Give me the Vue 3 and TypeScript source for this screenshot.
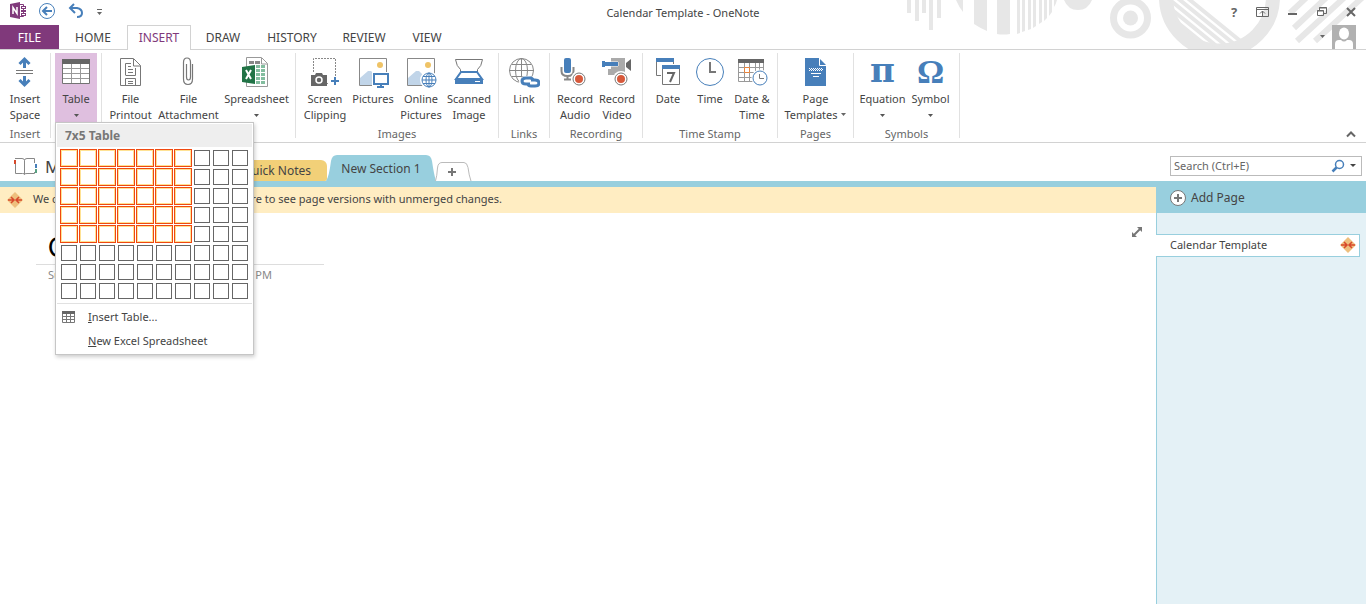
<script setup lang="ts">
import { ref } from 'vue'

interface Command {
  icon: string
  lines: string[]
  size: string
  drop?: 'below' | 'inline'
  active?: boolean
}
interface Group {
  name: string
  caption?: boolean
  size: string
  commands: Command[]
}

const tabs = [
  { name: 'FILE', kind: 'file' },
  { name: 'HOME', kind: 'home' },
  { name: 'INSERT', kind: 'insert' },
  { name: 'DRAW', kind: 'draw' },
  { name: 'HISTORY', kind: 'history' },
  { name: 'REVIEW', kind: 'review' },
  { name: 'VIEW', kind: 'view' },
]

const groups: Group[] = [
  { name: 'Insert', size: 'g50', commands: [{ icon: 'space', lines: ['Insert', 'Space'], size: 'w48' }] },
  { name: 'Tables', caption: false, size: 'g50', commands: [{ icon: 'table', lines: ['Table'], size: 'w42', drop: 'below', active: true }] },
  {
    name: 'Files',
    caption: false,
    size: 'g193',
    commands: [
      { icon: 'printout', lines: ['File', 'Printout'], size: 'w52' },
      { icon: 'attach', lines: ['File', 'Attachment'], size: 'w64' },
      { icon: 'sheet', lines: ['Spreadsheet'], size: 'w72', drop: 'below' },
    ],
  },
  {
    name: 'Images',
    size: 'g202',
    commands: [
      { icon: 'clip', lines: ['Screen', 'Clipping'], size: 'w48' },
      { icon: 'pictures', lines: ['Pictures'], size: 'w48' },
      { icon: 'online', lines: ['Online', 'Pictures'], size: 'w48' },
      { icon: 'scan', lines: ['Scanned', 'Image'], size: 'w48' },
    ],
  },
  { name: 'Links', size: 'g50', commands: [{ icon: 'link', lines: ['Link'], size: 'w42' }] },
  {
    name: 'Recording',
    size: 'g92',
    commands: [
      { icon: 'audio', lines: ['Record', 'Audio'], size: 'w42' },
      { icon: 'video', lines: ['Record', 'Video'], size: 'w42' },
    ],
  },
  {
    name: 'Time Stamp',
    size: 'g134',
    commands: [
      { icon: 'date', lines: ['Date'], size: 'w42' },
      { icon: 'time', lines: ['Time'], size: 'w42' },
      { icon: 'datetime', lines: ['Date &', 'Time'], size: 'w42' },
    ],
  },
  { name: 'Pages', size: 'g75', commands: [{ icon: 'template', lines: ['Page', 'Templates'], size: 'w72', drop: 'inline' }] },
  {
    name: 'Symbols',
    size: 'g105',
    commands: [
      { icon: 'pi', lines: ['Equation'], size: 'w48', drop: 'below' },
      { icon: 'omega', lines: ['Symbol'], size: 'w48', drop: 'below' },
    ],
  },
]

const columns = 10
const rows = 8
const picked = ref({ cols: 7, rows: 5 })
const cells = Array.from({ length: columns * rows }, (_, i) => ({ col: (i % columns) + 1, row: Math.floor(i / columns) + 1 }))
const isPicked = (c: { col: number; row: number }) => c.col <= picked.value.cols && c.row <= picked.value.rows
const query = ref('')
</script>

<template>
  <div class="window">
    <header class="top">
      <svg class="decor" width="470" height="49" viewBox="896 0 470 49" aria-hidden="true">
        <clipPath id="dial"><circle cx="1219.500" cy="-3" r="50" /></clipPath>
        <g fill="#e7e7e7">
          <path d="M907 0h4v13h-4zM915 0h4v21h-4zM922 0h4v13h-4zM929 0h4v30h-4zM937 0h4v18h-4z" />
          <path d="M956 0h7v12Q959 7 956 0zM974 0h13v31Q980 28 974 24zM997 0h13v34Q1003 35 997 34zM1017 0h3v33l-3 1zM1022 0h3v31l-3 1zM1028 0h3v29l-3 1zM1033 0h3v26l-3 2zM1039 0h3v22l-3 2zM1044 0h3v18l-3 3zM1049 0h3v12l-3 4zM1054 0h3q-1 4-3 7z" />
          <path d="M1064 0h28q-4 10-14 10t-14-10z" />
          <circle cx="1130.500" cy="18" r="7.500" />
        </g>
        <g fill="none" stroke="#e7e7e7">
          <circle cx="1130.500" cy="18" r="17" stroke-width="7" />
          <circle cx="1219.500" cy="-3" r="53.500" stroke-width="14" />
          <path clip-path="url(#dial)" d="M1185-4l64 52M1175-4l64 52M1165-4l64 52M1155-4l64 52M1145-4l64 52" stroke-width="4" />
          <path d="M1308-4l-18 17M1328-4l-34 32M1346-4l-49 45M1364-4l-49 45" stroke-width="6" />
        </g>
      </svg>
      <div class="titlebar">
        <div class="quick">
          <svg width="18" height="18" viewBox="0 0 18 18"><path d="M9.500 2.500h5v12h-5z" fill="#fff" stroke="#80397b" /><path d="M12 4h5v3h-5zM12 8h5v2h-5zM12 11h5v3h-5z" fill="#80397b" /><path d="M13 5h3v1h-3zM13 12h3v1h-3z" fill="#fff" /><path d="M1 2l10-2v17L1 15z" fill="#80397b" /><path d="M4 12V5.500l4 6V5" fill="none" stroke="#fff" stroke-width="1.500" /></svg>
          <button type="button" aria-label="Back"><svg width="18" height="18" viewBox="0 0 18 18" fill="none" stroke="#477fba"><circle cx="9" cy="9" r="7.500" /><path d="M14 9H5M9 5L5 9l4 4" stroke-width="2" /></svg></button>
          <button type="button" aria-label="Undo"><svg width="18" height="18" viewBox="0 0 18 18" fill="none" stroke="#477fba" stroke-width="2"><path d="M7 2L3 6l5 5M3 6h7q5 1 5 5t-5 4" /></svg></button>
          <button type="button" aria-label="Customize Quick Access Toolbar" class="more"><svg width="8" height="8" viewBox="0 0 8 8"><path d="M1 1h5v1H1zM1 4h5L3.500 7z" fill="#666" /></svg></button>
        </div>
        <h1>Calendar Template - OneNote</h1>
        <div class="controls">
          <button type="button" aria-label="Help" class="help">?</button>
          <button type="button" aria-label="Ribbon Display Options"><svg width="14" height="12" viewBox="0 0 14 12" fill="none" stroke="#666"><path d="M.5 1.500h12v9H.5zM1 3.500h11M6.500 10V5M4 7.500L6.500 5 9 7.500" /></svg></button>
          <button type="button" aria-label="Minimize"><svg width="12" height="12" viewBox="0 0 12 12"><path d="M1 7h9v2H1z" fill="#666" /></svg></button>
          <button type="button" aria-label="Restore"><svg width="12" height="12" viewBox="0 0 12 12" fill="none" stroke="#666"><path d="M3.500 4V1.500h7v6H8M3 2h8M1.500 4.500h6v5h-6zM1 5h7" /></svg></button>
          <button type="button" aria-label="Close"><svg width="12" height="12" viewBox="0 0 12 12"><path d="M2 2l8 8M10 2l-8 8" stroke="#666" stroke-width="2" /></svg></button>
        </div>
      </div>
      <div class="tabrow">
        <nav class="tabs">
          <button v-for="t in tabs" :key="t.name" type="button" :class="['tab', t.kind]">{{ t.name }}</button>
        </nav>
        <button type="button" class="account" aria-label="Account">
          <svg width="6" height="4" viewBox="0 0 6 4"><path d="M0 0h5L2.500 3z" fill="#666" /></svg>
          <svg width="24" height="24" viewBox="0 0 24 24"><path d="M0 0h24v24H0z" fill="#b1b1b1" /><ellipse cx="12" cy="8.500" rx="5" ry="6" fill="#fff" /><path d="M3 24v-5q0-4 4-4h2q3 3 6 0h2q4 0 4 4v5z" fill="#fff" /></svg>
        </button>
      </div>
    </header>

    <section class="ribbon" aria-label="Insert">
      <div v-for="g in groups" :key="g.name" :class="['group', g.size]" role="group" :aria-label="g.name">
        <div class="commands">
          <button v-for="c in g.commands" :key="c.icon" type="button" :class="['command', c.size, { active: c.active }]">
            <span class="glyph">
              <svg v-if="c.icon === 'space'" width="32" height="32" viewBox="0 0 32 32"><path d="M7 14.500h17M7 17.500h17" stroke="#777" /><path d="M15.500 12V3M10.500 8l5-5 5 5M15.500 20v9M10.500 24l5 5 5-5" fill="none" stroke="#477fba" stroke-width="3" /></svg>
              <svg v-else-if="c.icon === 'table'" width="32" height="32" viewBox="0 0 32 32"><path d="M2.500 3.500h27v24h-27z" fill="#fff" stroke="#737373" /><path d="M2 3h28v5H2z" fill="#666" /><path d="M3 12.500h26M3 17.500h26M3 22.500h26M11.500 8v19M20.500 8v19" stroke="#999" /></svg>
              <svg v-else-if="c.icon === 'printout'" width="32" height="32" viewBox="0 0 32 32" fill="none" stroke="#777"><path d="M5.500 2.500h13l7 7v20h-20zM18.500 3v7h7" fill="#fff" /><path d="M10.500 19V7.500h5.500M20.500 12v7.500h-10M13 10.500h3M13 13.500h5M13 16.500h5M10.500 29v-6.500h10V29M13 25.500h5M13 27.500h5" /></svg>
              <svg v-else-if="c.icon === 'attach'" width="32" height="32" viewBox="0 0 32 32" fill="none" stroke="#777"><path d="M13.500 8v13q0 3 2 3t2-3V6.500Q17.500 2 14 2t-3.500 4.500V23q0 5.500 4.500 5.500t4.500-5.500V8" stroke-width="1.200" /></svg>
              <svg v-else-if="c.icon === 'sheet'" width="32" height="32" viewBox="0 0 32 32"><path d="M5.500 1.500h15l6 6v23h-21zM20.500 2v6h6" fill="#fff" stroke="#999" /><path d="M8 5h5v3H8zM14 5h5v3h-5z" fill="#888" /><path d="M15 9h4v3h-4zM20 9h4v3h-4zM15 13h4v3h-4zM20 13h4v3h-4zM15 17h4v3h-4zM20 17h4v3h-4zM15 21h4v3h-4zM20 21h4v3h-4zM15 25h4v3h-4zM20 25h4v3h-4z" fill="#83bd9f" /><path d="M1 11l13-2v19L1 26z" fill="#217346" /><path d="M5 14l5 9M10 14l-5 9" stroke="#fff" stroke-width="2" /></svg>
              <svg v-else-if="c.icon === 'clip'" width="32" height="32" viewBox="0 0 32 32"><path d="M4.500 16V2.500h22V22M17 27.500h3" fill="none" stroke="#888" stroke-dasharray="2 1" /><path d="M2 19h4l1-2h6l1 2h4v11H2z" fill="#666" /><circle cx="10" cy="24" r="3" fill="#666" stroke="#fff" stroke-width="1.500" /><path d="M26 21v8M22 25h8" stroke="#477fba" stroke-width="2" /></svg>
              <svg v-else-if="c.icon === 'pictures' || c.icon === 'online'" width="32" height="32" viewBox="0 0 32 32"><path d="M2.500 2.500h27v27h-27z" fill="#fff" stroke="#888" /><path d="M3 29V22l8-7h3l9 9v5z" fill="#c1d5e9" /><circle cx="23" cy="9" r="3" fill="#efc366" /><template v-if="c.icon === 'pictures'"><path d="M15 16h17v16H15z" fill="#fff" /><path d="M17 18h14v10H17zM24 28v3M20 31h7" fill="#fff" stroke="#477fba" stroke-width="2" /></template><template v-else><circle cx="24" cy="24" r="9" fill="#fff" /><g fill="none" stroke="#477fba"><circle cx="24" cy="24" r="7" /><ellipse cx="24" cy="24" rx="3" ry="7" /><path d="M24 17v14M17 24h14M18 20.500h12M18 27.500h12" /></g></template></svg>
              <svg v-else-if="c.icon === 'scan'" width="32" height="32" viewBox="0 0 32 32"><path d="M2.500 3.500h27q-1 7-5 10v5h-17v-5q-4-3-5-10z" fill="#fff" stroke="#777" /><path d="M8 16h16l5 7H3z" fill="#fff" stroke="#477fba" stroke-width="2" /><path d="M2 23h28v5H2z" fill="#477fba" /><path d="M22 25.500h5" stroke="#fff" /></svg>
              <svg v-else-if="c.icon === 'link'" width="32" height="32" viewBox="0 0 32 32" fill="none"><g stroke="#888"><circle cx="13.500" cy="14.500" r="12" /><ellipse cx="13.500" cy="14.500" rx="6" ry="12" /><path d="M13.500 2v25M1 14.500h25M4 8.500h19M4 20.500h19" /></g><g stroke="#fff" stroke-width="6"><rect x="14" y="23" width="10" height="6" rx="3" /><rect x="21" y="24" width="9" height="6" rx="3" /></g><g stroke="#477fba" stroke-width="3"><path d="M22 28h-4q-4 0-4-3t4-3h4q3 0 3 3" /><path d="M23 24h4q4 0 4 3t-4 3h-4q-3 0-3-3" /></g></svg>
              <svg v-else-if="c.icon === 'audio'" width="32" height="32" viewBox="0 0 32 32"><rect x="5" y="2" width="7" height="15" rx="2" fill="#477fba" /><path d="M2.500 11v4q0 5 6 5t6-5v-4M8.500 20v4M5 23.500h7" fill="none" stroke="#888" stroke-width="2" /><circle cx="20" cy="23" r="8" fill="#fff" /><circle cx="20" cy="23" r="6" fill="#fff" stroke="#777" /><circle cx="20" cy="23" r="4" fill="#d7593b" /></svg>
              <svg v-else-if="c.icon === 'video'" width="32" height="32" viewBox="0 0 32 32"><path d="M10 2h14v17H7v-6h3z" fill="#aaa" /><path d="M25 7l5-4v12l-5-4z" fill="#666" /><path d="M1 5h3v1h13v4H4v1H1z" fill="#477fba" stroke="#fff" /><path d="M1 5h3v1h13v4H4v1H1z" fill="#477fba" /><circle cx="20" cy="23" r="8" fill="#fff" /><circle cx="20" cy="23" r="6" fill="#fff" stroke="#777" /><circle cx="20" cy="23" r="4" fill="#d7593b" /></svg>
              <svg v-else-if="c.icon === 'date'" width="32" height="32" viewBox="0 0 32 32"><path d="M4.500 2.500h17v17h-17z" fill="#fff" stroke="#777" /><path d="M4 2h18v4H4z" fill="#477fba" /><path d="M9 8h20v22H9z" fill="#fff" /><path d="M10.500 9.500h17v19h-17z" fill="#fff" stroke="#777" /><path d="M10 9h18v4H10z" fill="#477fba" /><path d="M15 17h7l-4 9" fill="none" stroke="#666" stroke-width="2" /></svg>
              <svg v-else-if="c.icon === 'time'" width="32" height="32" viewBox="0 0 32 32" fill="none"><circle cx="16" cy="16" r="13.500" stroke="#477fba" /><path d="M16 6v10h6" stroke="#777" stroke-width="2" /></svg>
              <svg v-else-if="c.icon === 'datetime'" width="32" height="32" viewBox="0 0 32 32" fill="none"><path d="M2.500 3.500h25v22h-25zM3 11.500h24M3 16.500h24M3 21.500h24M8.500 7v18M13.500 7v18M19.500 7v18M23.500 7v18" stroke="#999" /><path d="M2 3h26v4H2z" fill="#666" /><path d="M8.500 11.500h5v5h-5z" stroke="#e8833a" fill="#fff" /><circle cx="24" cy="22" r="8.500" fill="#fff" /><circle cx="24" cy="22" r="7" stroke="#477fba" /><path d="M23.500 18v4.500H28" stroke="#777" /></svg>
              <svg v-else-if="c.icon === 'template'" width="32" height="32" viewBox="0 0 32 32"><path d="M5 2h14l7 7v21H5z" fill="#477fba" /><path d="M19.500 2v7.500H26" fill="none" stroke="#fff" /><path d="M9 12.500h13M9 14.500h13" stroke="#fff" stroke-dasharray="1 1" /><path d="M10 13.500h13" stroke="#fff" stroke-dasharray="1 1" /><path d="M11 17.500h10M13 20.500h6" stroke="#fff" /></svg>
              <span v-else :class="['greek', c.icon]">{{ c.icon === 'pi' ? 'π' : 'Ω' }}</span>
            </span>
            <span v-for="(l, i) in c.lines" :key="l" class="line">{{ l }}<svg v-if="c.drop === 'inline' && i === 1" class="arrow" width="6" height="4" viewBox="0 0 6 4"><path d="M0 0h5L2.500 3z" fill="#666" /></svg></span>
            <span v-if="c.drop === 'below'" class="line caret"><svg width="5" height="3" viewBox="0 0 5 3"><path d="M0 0h5L2.500 3z" fill="#555" /></svg></span>
          </button>
        </div>
        <div v-if="g.caption !== false" class="caption">{{ g.name }}</div>

        <div v-if="g.name === 'Tables'" class="menu">
          <div class="menu-title">{{ picked.cols }}x{{ picked.rows }} Table</div>
          <div class="picker">
            <button v-for="c in cells" :key="c.row * 100 + c.col" type="button" :class="['cell', { picked: isPicked(c) }]" :aria-label="`${c.col} by ${c.row} table`" @mouseenter="picked = { cols: c.col, rows: c.row }"></button>
          </div>
          <button type="button" class="item">
            <svg width="13" height="12" viewBox="0 0 13 12"><path d="M.5.5h12v11H.5zM1 5.500h11M1 8.500h11M4.500 3v8M8.500 3v8" fill="none" stroke="#777" /><path d="M0 0h13v3H0z" fill="#666" /></svg>
            <span><u>I</u>nsert Table...</span>
          </button>
          <button type="button" class="item">
            <span class="blank"></span>
            <span><u>N</u>ew Excel Spreadsheet</span>
          </button>
        </div>
      </div>
      <button type="button" class="collapse" aria-label="Collapse the Ribbon"><svg width="10" height="7" viewBox="0 0 10 7"><path d="M1 5.500l4-4 4 4" fill="none" stroke="#666" stroke-width="2" /></svg></button>
    </section>

    <div class="bookbar">
      <button type="button" class="notebook">
        <svg width="24" height="20" viewBox="0 0 24 20" fill="none"><path d="M2 1.500h7q2.500 0 2.500 2v14q0-1-2-1H2.500V7M11.500 3.500q0-2 2.500-2h7.500V6M21.500 15v1.500H14q-2.500 0-2.500 1" stroke="#888" /><path d="M1 3h2v4H1z" fill="#d7492b" /><path d="M22 7h2v4h-2z" fill="#477fba" /><path d="M22 12h2v4h-2z" fill="#58a182" /></svg>
        <span>My Notebook</span>
      </button>
      <div class="sections">
        <button type="button" class="section notes">Quick Notes</button>
        <button type="button" class="section current">
          <svg width="110" height="26" viewBox="0 0 110 26" aria-hidden="true"><path d="M0 26Q3 22 5 6 6 0 11 0h89q5 0 6 6 2 14 4 20z" fill="#98cfde" /></svg>
          <span>New Section 1</span>
        </button>
        <button type="button" class="section add" aria-label="Create a New Section"><svg width="37" height="19" viewBox="0 0 37 19"><path d="M.5 19Q2 14 2.500 6 3 .5 7 .5h22q3 0 4 5 1 8 3 13.500" fill="#fff" stroke="#bbb" /><path d="M17 6v8M13 10h8" stroke="#777" stroke-width="2" /></svg></button>
      </div>
      <form class="search" role="search" @submit.prevent>
        <input v-model="query" type="text" aria-label="Search" placeholder="Search (Ctrl+E)" />
        <button type="submit" aria-label="Search"><svg width="14" height="14" viewBox="0 0 14 14" fill="none" stroke="#477fba"><circle cx="8.500" cy="5.500" r="4" stroke-width="1.500" /><path d="M5.500 8.500l-4 4" stroke-width="2.500" /></svg></button>
        <button type="button" aria-label="Search scope"><svg width="6" height="4" viewBox="0 0 6 4"><path d="M0 0h6L3 3z" fill="#444" /></svg></button>
      </form>
    </div>

    <div class="body">
      <main class="page">
        <button type="button" class="notice">
          <svg width="16" height="16" viewBox="0 0 16 16"><path d="M8 0l8 8-8 8-8-8z" fill="#eebf7d" /><path d="M1 8h5M4 5l3 3-3 3M15 8h-5M12 5L9 8l3 3" fill="none" stroke="#d7492b" stroke-width="1.500" /></svg>
          <span class="notice-text"><span>We couldn't merge some changes.</span><span>Click here to see page versions with unmerged changes.</span></span>
        </button>
        <div class="sheet">
          <div class="note">
            <h2>Calendar</h2>
            <p><span>Sunday, March 1</span><span>3:30 PM</span></p>
          </div>
          <button type="button" class="expand" aria-label="Full Page View"><svg width="12" height="12" viewBox="0 0 12 12"><path d="M6 1h5v5zM1 6v5h5z" fill="#777" /><path d="M2.500 9.500l7-7" stroke="#777" stroke-width="2" /></svg></button>
        </div>
      </main>
      <aside class="pages">
        <button type="button" class="addpage">
          <svg width="16" height="16" viewBox="0 0 16 16"><circle cx="8" cy="8" r="7.500" fill="#fff" stroke="#777" /><path d="M8 4v8M4 8h8" stroke="#777" stroke-width="2" /></svg>
          Add Page
        </button>
        <button type="button" class="pageitem">
          <span>Calendar Template</span>
          <svg width="16" height="16" viewBox="0 0 16 16"><path d="M8 0l8 8-8 8-8-8z" fill="#eebf7d" /><path d="M1 8h5M4 5l3 3-3 3M15 8h-5M12 5L9 8l3 3" fill="none" stroke="#d7492b" stroke-width="1.500" /></svg>
        </button>
      </aside>
    </div>
  </div>
</template>

<style>
body {
  background: #fff;
}
</style>

<style scoped>
.window {
  min-height: 100vh;
  display: flex;
  flex-direction: column;
  font-family: "Noto Sans", "Open Sans", sans-serif;
  font-size: 11px;
  line-height: 16px;
  color: #444;
}
.window * { box-sizing: border-box; }
button {
  font: inherit;
  color: inherit;
  padding: 0;
  margin: 0;
  border: 0;
  background: none;
}
svg { flex: none; display: block; }
h1, h2, p { margin: 0; font-weight: 400; }

.top { position: relative; }
.decor { position: absolute; right: 0; top: 0; }
.titlebar, .tabrow { position: relative; }
.titlebar {
  height: 25px;
  display: grid;
  grid-template-columns: 1fr auto 1fr;
  align-items: center;
}
.quick { display: flex; align-items: center; gap: 11px; padding: 0 0 3px 9px; }
.more { padding-top: 2px; }
h1 { font-size: 11px; }
.controls { display: flex; justify-content: flex-end; align-items: center; gap: 17px; padding: 0 9px 2px 0; }
.help { width: 10px; font-weight: 700; font-size: 13px; color: #666; }
.tabrow {
  height: 25px;
  display: flex;
  justify-content: space-between;
  border-bottom: 1px solid #d2d2d2;
}
.tabs { display: flex; font-size: 12px; }
.tab { height: 24px; width: 64px; padding-top: 2px; }
.file { background: #80397b; color: #fff; width: 59px; }
.home { width: 68px; }
.insert {
  height: 25px;
  padding-top: 0;
  color: #80397b;
  background: #fff;
  border: 1px solid #d2d2d2;
  border-bottom: 0;
}
.history { width: 74px; }
.review { width: 70px; }
.view { width: 56px; }
.account { display: flex; align-items: center; gap: 6px; padding-right: 10px; }

.ribbon {
  height: 93px;
  display: flex;
  border-bottom: 1px solid #d2d2d2;
  padding-top: 3px;
}
.group {
  position: relative;
  flex: none;
  box-sizing: content-box !important;
  border-right: 1px solid #e1e1e1;
  height: 85px;
}
.g50 { width: 50px; }
.g75 { width: 75px; }
.g92 { width: 92px; }
.g105 { width: 105px; }
.g134 { width: 134px; }
.g193 { width: 193px; }
.g202 { width: 202px; }
.commands { display: flex; justify-content: center; height: 73px; }
.command {
  display: flex;
  flex-direction: column;
  align-items: center;
  white-space: nowrap;
}
.active { background: #dfbfdf; }
.w42 { width: 42px; }
.w48 { width: 48px; }
.w52 { width: 52px; }
.w64 { width: 64px; }
.w72 { width: 72px; }
.glyph { height: 38px; display: flex; align-items: center; }
.greek { font: 700 34px/32px "Liberation Serif", serif; color: #477fba; }
.pi { font: 700 34px/30px "DejaVu Serif", serif; padding-bottom: 4px; }
.line { display: flex; align-items: center; gap: 3px; height: 16px; }
.caption { text-align: center; color: #666; }
.collapse { margin-left: auto; padding: 0 10px 4px 0; display: flex; align-items: flex-end; }

.menu {
  position: absolute;
  z-index: 5;
  left: 4px;
  top: 69px;
  width: 199px;
  background: #fff;
  border: 1px solid #c6c6c6;
  box-shadow: 1px 2px 4px rgba(0, 0, 0, 0.2);
  padding: 1px;
}
.menu-title { height: 23px; padding: 4px 8px; background: #eee; font-size: 12px; font-weight: 700; color: #777; }
.picker {
  display: grid;
  grid-template-columns: repeat(10, 16px);
  grid-auto-rows: 16px;
  gap: 3px;
  padding: 3px 4px 4px;
  border-bottom: 1px solid #e1e1e1;
  margin-bottom: 1px;
}
.cell { border: 1px solid #666; background: #fff; }
.picked { border-color: #ffe294; outline: 1px solid #ef4810; }
.item { display: flex; align-items: center; gap: 13px; width: 100%; height: 24px; padding-left: 5px; }
.blank { width: 13px; }

.bookbar {
  height: 44px;
  display: flex;
  border-bottom: 6px solid #98cfde;
}
.notebook { display: flex; align-items: center; gap: 8px; width: 232px; padding: 9px 0 0 13px; font-size: 17px; }
.sections { display: flex; align-items: flex-end; flex: 1; }
.section { height: 21px; font-size: 12px; }
.notes { width: 95px; padding-right: 16px; text-align: right; background: #f2d078; border-radius: 4px 6px 2px 0; }
.current { display: grid; width: 110px; height: 26px; margin-left: -1px; place-items: center; }
.current > * { grid-area: 1 / 1; }
.current span { padding-top: 2px; }
.add { height: 19px; margin-left: -1px; }
.search {
  display: flex;
  align-items: center;
  gap: 5px;
  width: 192px;
  height: 20px;
  margin: 13px 4px 0 0;
  padding: 0 5px 0 3px;
  border: 1px solid #bbb;
}
.search input { flex: 1; min-width: 0; border: 0; outline: 0; padding: 0; font: inherit; color: #666; background: none; }
.search input::placeholder { color: #666; opacity: 1; }

.body { flex: 1; display: flex; }
.page { flex: 1; min-width: 0; }
.notice {
  display: flex;
  align-items: center;
  gap: 10px;
  width: 100%;
  height: 26px;
  padding: 0 7px;
  background: #ffedc2;
}
.notice-text { display: flex; justify-content: space-between; width: 469px; padding-bottom: 2px; white-space: nowrap; }
.sheet { display: flex; justify-content: space-between; align-items: flex-start; padding: 13px 13px 0 36px; }
.note { width: 288px; }
.note h2 { padding: 4px 12px 0; height: 39px; border-bottom: 1px solid #ddd; font: 26px/34px Lato, sans-serif; color: #000; }
.note p { display: flex; justify-content: space-between; padding: 2px 52px 0 12px; color: #888; }
.pages { width: 210px; border-left: 1px solid #98cfde; background: #e4f1f6; }
.addpage {
  display: flex;
  align-items: center;
  gap: 5px;
  width: 100%;
  height: 26px;
  padding: 0 13px 4px;
  background: #98cfde;
  font-size: 12px;
}
.pageitem {
  display: flex;
  align-items: center;
  justify-content: space-between;
  width: 204px;
  height: 23px;
  margin: 21px 0 0 -1px;
  padding: 0 3px 1px 14px;
  background: #fff;
  border: 1px solid #98cfde;
  border-left: 0;
}
</style>
